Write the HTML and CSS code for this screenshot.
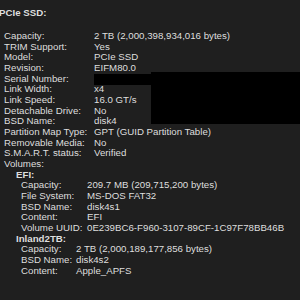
FILE: index.html
```html
<!DOCTYPE html>
<html lang="en">
<head>
    <meta charset="UTF-8">
    <title>PCIe SSD</title>
    <link rel="stylesheet" href="styles.css">
</head>
<body>
    <div class="panel">
        <div class="title">PCIe SSD:</div>

        <div class="info">
            <span>Capacity:</span><span>2 TB (2,000,398,934,016 bytes)</span>
            <span>TRIM Support:</span><span>Yes</span>
            <span>Model:</span><span>PCIe SSD</span>
            <span>Revision:</span><span>EIFM80.0</span>
            <span>Serial Number:</span><span></span>
            <span>Link Width:</span><span>x4</span>
            <span>Link Speed:</span><span>16.0 GT/s</span>
            <span>Detachable Drive:</span><span>No</span>
            <span>BSD Name:</span><span>disk4</span>
            <span>Partition Map Type:</span><span>GPT (GUID Partition Table)</span>
            <span>Removable Media:</span><span>No</span>
            <span>S.M.A.R.T. status:</span><span>Verified</span>
        </div>

        <div class="row">Volumes:</div>

        <div class="volume">
            <div class="vol-name">EFI:</div>
            <div class="info efi">
                <span>Capacity:</span><span>209.7 MB (209,715,200 bytes)</span>
                <span>File System:</span><span>MS-DOS FAT32</span>
                <span>BSD Name:</span><span>disk4s1</span>
                <span>Content:</span><span>EFI</span>
                <span>Volume UUID:</span><span>0E239BC6-F960-3107-89CF-1C97F78BB46B</span>
            </div>
        </div>

        <div class="volume">
            <div class="vol-name">Inland2TB:</div>
            <div class="info inland">
                <span>Capacity:</span><span>2 TB (2,000,189,177,856 bytes)</span>
                <span>BSD Name:</span><span>disk4s2</span>
                <span>Content:</span><span>Apple_APFS</span>
            </div>
        </div>

        <div class="redact serial"></div>
        <div class="redact block"></div>
    </div>
</body>
</html>
```

FILE: styles.css
```css
body {
    margin: 0;
    background-color: #1f1f1f;
    color: #dedede;
    font-family: "Liberation Sans", Arial, sans-serif;
    font-size: 9.7px;
    line-height: 10.68px;
    overflow: hidden;
}
.panel {
    position: relative;
    height: 300px;
    padding: 8px 0 0 4px;
    box-sizing: border-box;
}
.title {
    font-weight: bold;
    margin-left: -5px;
    margin-bottom: 12.3px;
}
.info {
    display: grid;
    grid-template-columns: 90px auto;
    white-space: nowrap;
}
.info span {
    height: 10.68px;
}
.volume {
    padding-left: 12px;
}
.vol-name {
    font-weight: bold;
}
.volume .info {
    padding-left: 5px;
}
.efi {
    grid-template-columns: 66px auto;
}
.inland {
    grid-template-columns: 55px auto;
}
.redact {
    position: absolute;
    background-color: #000;
}
.serial {
    left: 94px;
    right: 0;
    top: 74px;
    height: 11px;
}
.block {
    left: 151px;
    right: 0;
    top: 72px;
    height: 52px;
}
```
